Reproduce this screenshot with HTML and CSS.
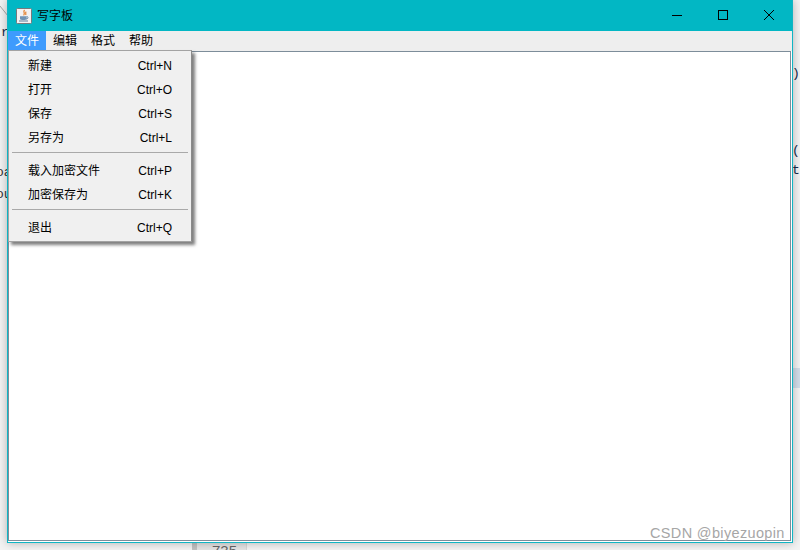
FILE: index.html
```html
<!DOCTYPE html>
<html lang="zh-CN">
<head>
    <meta charset="UTF-8">
    <meta name="viewport" content="width=device-width, initial-scale=1.0">
    <title>写字板</title>
    <link rel="stylesheet" href="styles.css">
</head>
<body>
    <!-- IDE behind the window -->
    <div class="backdrop">
        <svg class="corner-line" width="8" height="20" viewBox="0 0 8 20"><path d="M0 3 L8 13" stroke="#a8a8a8" fill="none"/></svg>
        <span class="frag frag-r">r</span>
        <span class="frag frag-oa">oa</span>
        <span class="frag frag-ou">ou</span>
        <span class="frag frag-paren1">)</span>
        <span class="frag frag-paren2">(</span>
        <span class="frag frag-t">t</span>
        <div class="band"></div>
        <div class="gutter"><span>735</span></div>
    </div>

    <div class="window">
        <div class="titlebar">
            <svg class="app-icon" width="16" height="16" viewBox="0 0 16 16">
                <rect x="0.5" y="0.5" width="15" height="15" rx="1" fill="#f2f2f2" stroke="#77797c"/>
                <path d="M8.5 2 C6.5 4 9.8 5 7.6 7.4 M10.2 3.6 C8.8 4.8 10.6 5.6 9.6 7" stroke="#e2761b" stroke-width="1.1" fill="none"/>
                <path d="M4 8.2 H10.6 V10.6 C10.6 11.8 9.6 12 8.6 12 H6 C5 12 4 11.8 4 10.6 Z" fill="#6f93b4"/>
                <path d="M10.6 8.8 C12.6 8.4 12.6 10.8 10.2 11" stroke="#5b7f9f" fill="none"/>
                <path d="M3 13 H12" stroke="#5b7f9f"/>
            </svg>
            <span class="app-title">写字板</span>
            <div class="controls">
                <svg class="ctl" width="46" height="31" viewBox="0 0 46 31"><path d="M18 15.5 H28" stroke="#000"/></svg>
                <svg class="ctl" width="46" height="31" viewBox="0 0 46 31"><rect x="18.5" y="10.5" width="9" height="9" fill="none" stroke="#000"/></svg>
                <svg class="ctl" width="46" height="31" viewBox="0 0 46 31"><path d="M18 10 L28 20 M28 10 L18 20" stroke="#000"/></svg>
            </div>
        </div>

        <div class="menubar">
            <div class="menu-top active">文件</div>
            <div class="menu-top">编辑</div>
            <div class="menu-top">格式</div>
            <div class="menu-top">帮助</div>
        </div>

        <div class="editor"></div>

        <div class="dropdown">
            <div class="item"><span class="label">新建</span><span class="key">Ctrl+N</span></div>
            <div class="item"><span class="label">打开</span><span class="key">Ctrl+O</span></div>
            <div class="item"><span class="label">保存</span><span class="key">Ctrl+S</span></div>
            <div class="item"><span class="label">另存为</span><span class="key">Ctrl+L</span></div>
            <div class="sep"></div>
            <div class="item"><span class="label">载入加密文件</span><span class="key">Ctrl+P</span></div>
            <div class="item"><span class="label">加密保存为</span><span class="key">Ctrl+K</span></div>
            <div class="sep"></div>
            <div class="item"><span class="label">退出</span><span class="key">Ctrl+Q</span></div>
        </div>
    </div>

    <div class="watermark">CSDN @biyezuopin</div>
</body>
</html>
```

FILE: styles.css
```css
html, body {
    margin: 0;
    padding: 0;
}

body {
    position: relative;
    width: 800px;
    height: 550px;
    overflow: hidden;
    background-color: #f3f3f3;
    font-family: "Noto Sans CJK SC", "Liberation Sans", sans-serif;
    font-size: 12px;
    color: #000;
}

/* background */
.backdrop {
    position: absolute;
    inset: 0;
}

.corner-line {
    position: absolute;
    left: 0;
    top: 3px;
}

.frag {
    position: absolute;
    font-family: "Liberation Mono", monospace;
    font-size: 13px;
    line-height: 16px;
    color: #1a2a4a;
}

.frag-r { left: 1px; top: 25px; }
.frag-oa { left: -4px; top: 165px; color: #333; }
.frag-ou { left: -4px; top: 187px; color: #333; }
.frag-paren1 { left: 792px; top: 66px; }
.frag-paren2 { left: 792px; top: 143px; }
.frag-t { left: 792px; top: 163px; }

.band {
    position: absolute;
    left: 793px;
    top: 368px;
    width: 7px;
    height: 20px;
    background-color: #d3dde9;
}

.gutter {
    position: absolute;
    left: 192px;
    top: 543px;
    width: 55px;
    height: 7px;
    padding-left: 6px;
    overflow: hidden;
    background-color: #e4e4e4;
    border-left: 5px solid #c2c2c2;
    border-right: 1px solid #d8d8d8;
    box-sizing: border-box;
    font-family: "Liberation Sans", sans-serif;
    font-size: 15px;
    line-height: 15px;
    color: #666;
    text-align: center;
}

/* window */
.window {
    position: absolute;
    left: 7px;
    top: 0;
    width: 786px;
    height: 543px;
    box-sizing: border-box;
    display: flex;
    flex-direction: column;
    background-color: #fff;
    border: 1px solid #0fb5c4;
    border-top: none;
    box-shadow: 0 0 9px rgba(0, 0, 0, 0.28);
}

.titlebar {
    display: flex;
    align-items: center;
    height: 31px;
    flex-shrink: 0;
    padding-left: 8px;
    background-color: #02b7c4;
}

.app-icon {
    margin-right: 5px;
}

.app-title {
    font-size: 12px;
    line-height: 16px;
    margin-bottom: 2px;
}

.controls {
    display: flex;
    margin-left: auto;
    margin-right: 0;
}

.menubar {
    display: flex;
    height: 20px;
    flex-shrink: 0;
    background-color: #eeeeee;
}

.menu-top {
    width: 38px;
    box-sizing: border-box;
    padding-left: 7px;
    line-height: 18px;
}

.menu-top.active {
    background-color: #3e9bfd;
    color: #fff;
}

.editor {
    flex: 1;
    margin: 0 1px 1px 0;
    background-color: #fff;
    border: 1px solid #7d8d9a;
}

/* file menu */
.dropdown {
    position: absolute;
    left: 0;
    top: 50px;
    width: 184px;
    height: 192px;
    box-sizing: border-box;
    padding-top: 2px;
    background-color: #f0f0f0;
    border: 1px solid #a3a3a3;
    border-right-color: #8a8a8a;
    box-shadow: 3px 3px 3px rgba(0, 0, 0, 0.5);
}

.item {
    display: flex;
    justify-content: space-between;
    align-items: center;
    height: 24px;
    padding: 0 19px;
}

.label {
    margin-bottom: 2px;
}

.key {
    font-family: "Liberation Sans", sans-serif;
    font-size: 12px;
    margin-top: 2px;
}

.sep {
    height: 1px;
    margin: 3px 3px 5px 3px;
    background-color: #a9a9a9;
}

.watermark {
    position: absolute;
    left: 650px;
    top: 524px;
    font-family: "Liberation Sans", sans-serif;
    font-size: 14.5px;
    line-height: 18px;
    letter-spacing: 0.35px;
    color: #a6a6a6;
}
```
